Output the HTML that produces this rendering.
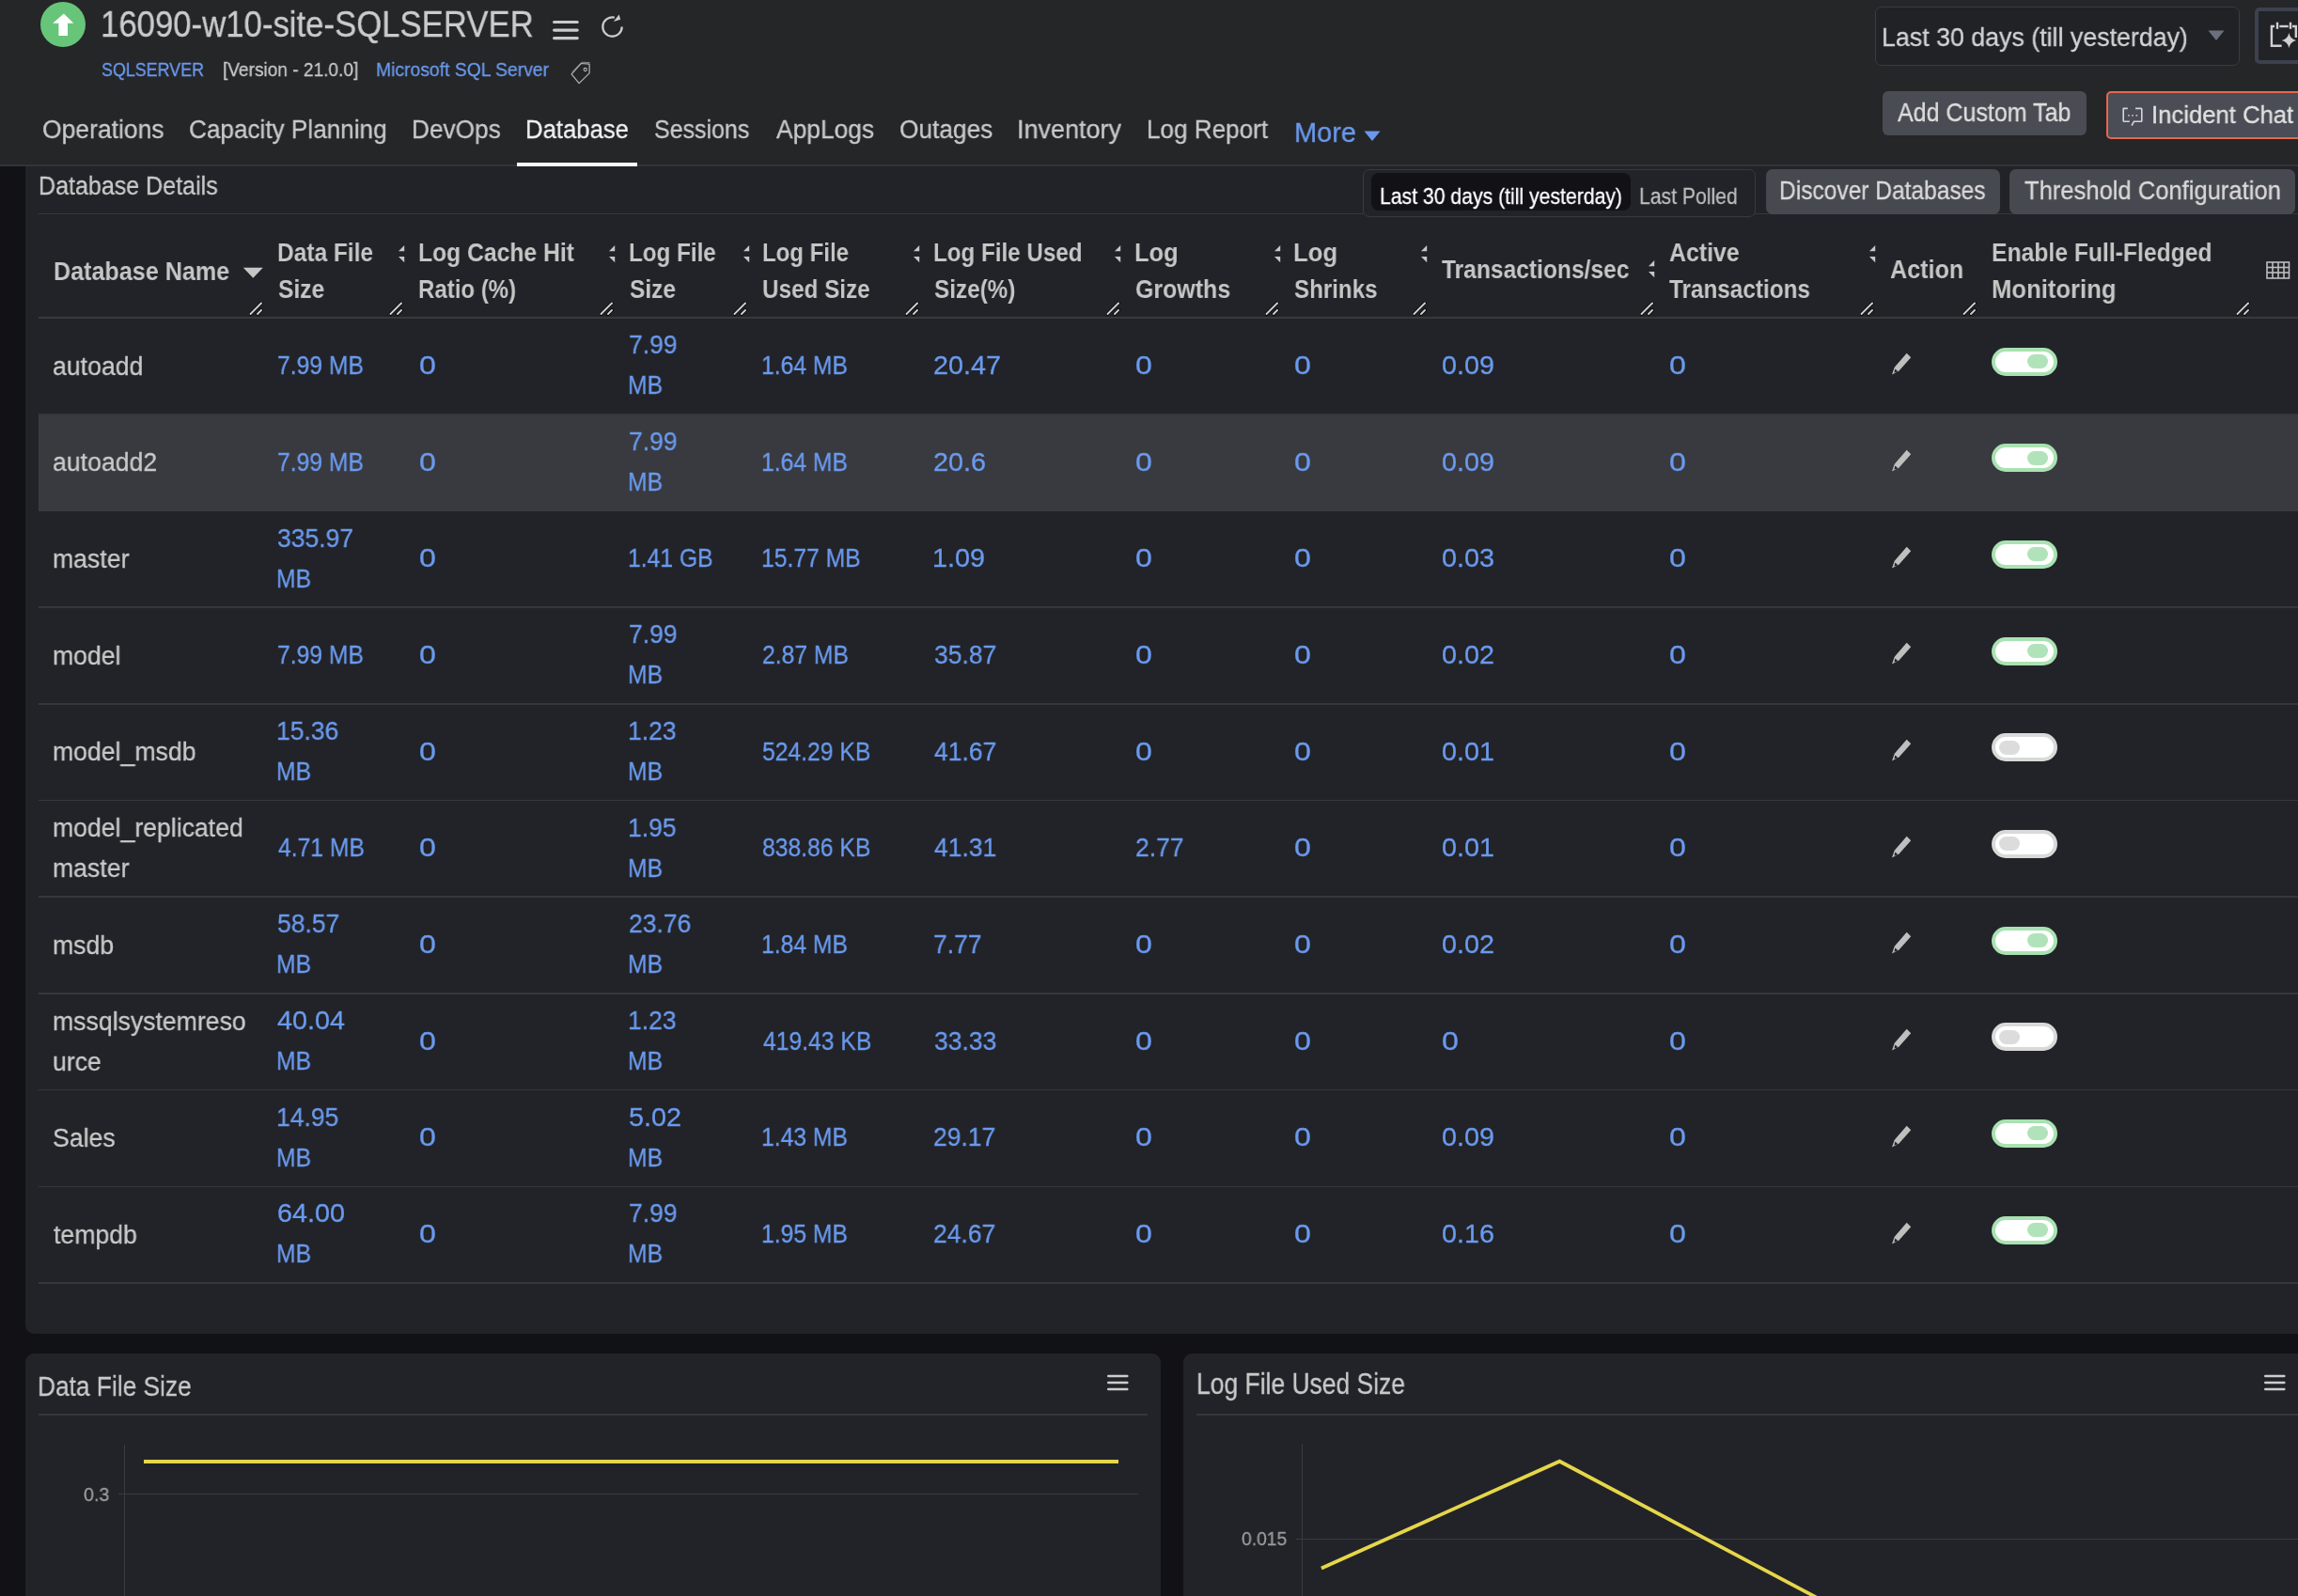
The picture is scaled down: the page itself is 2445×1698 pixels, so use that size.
<!DOCTYPE html>
<html><head><meta charset="utf-8"><title>Database</title>
<style>
html,body{margin:0;padding:0;}
body{width:2445px;height:1698px;overflow:hidden;background:#111116;position:relative;font-family:"Liberation Sans",sans-serif;}
.t{position:absolute;white-space:pre;line-height:1;transform-origin:0 0;}
.b{position:absolute;box-sizing:border-box;}
.t{will-change:transform;}
.t{-webkit-text-stroke:0.3px currentColor;}
.t[style*="font-weight:700"]{-webkit-text-stroke:0;}

</style></head><body>
<div class="b" style="left:0;top:0;width:2445px;height:175px;background:#252628"></div>
<div class="b" style="left:0;top:175px;width:2445px;height:2px;background:#333437"></div>
<div class="b" style="left:43px;top:2px;width:48px;height:48px;border-radius:50%;background:#67c57a"></div>
<svg class="b" style="left:43px;top:2px" width="48" height="48"><path d="M24.9 12.4 L35.3 22.8 L29 22.8 L29 35.9 L19.4 35.9 L19.4 22.8 L13.1 22.8 Z" fill="#fff"/></svg>
<svg class="b" style="left:586px;top:18px" width="32" height="28"><g stroke="#cbcbcb" stroke-width="3.2" stroke-linecap="round"><line x1="3.6" y1="5.5" x2="28.2" y2="5.5"/><line x1="3.6" y1="14.1" x2="28.2" y2="14.1"/><line x1="3.6" y1="22.6" x2="28.2" y2="22.6"/></g></svg>
<svg class="b" style="left:636px;top:12px" width="32" height="32"><path d="M25.7 16.5 A10.2 10.2 0 1 1 17.8 6.6" fill="none" stroke="#cbcbcb" stroke-width="2.3"/><path d="M16.8 10.9 L24.2 8.8 L22.6 3.4 Z" fill="#cbcbcb"/></svg>
<svg class="b" style="left:604px;top:63px" width="28" height="30"><path d="M4.1 15.8 L12.1 25.6 L23.1 14.9 L23.1 5.1 L14.2 4.5 Z" fill="none" stroke="#b5b5b5" stroke-width="1.2" stroke-linejoin="round"/><path d="M5 13.5 L14.8 3.2 L23.6 3.6" fill="none" stroke="#8a8a8a" stroke-width="1"/><circle cx="18.7" cy="11" r="1.6" fill="none" stroke="#b5b5b5" stroke-width="1.1"/></svg>
<svg class="b" style="left:1451px;top:139px" width="18" height="12"><path d="M0.5 0.5 L17.5 0.5 L9 11 Z" fill="#6a9aee"/></svg>
<div class="b" style="left:550px;top:173px;width:128px;height:4px;background:#fafafa"></div>
<div class="b" style="left:1994.5px;top:6.5px;width:388px;height:63px;border:1px solid #3a3b3f;border-radius:7px;background:#212226"></div>
<svg class="b" style="left:2349px;top:32px" width="18" height="12"><path d="M0.5 0.5 L17.5 0.5 L9 11 Z" fill="#6b707c"/></svg>
<div class="b" style="left:2399.2px;top:8.2px;width:60px;height:59.5px;border:4px solid #3c414d;border-radius:5px;background:#222327"></div>
<svg class="b" style="left:2413px;top:22px" width="34" height="32"><g fill="none" stroke="#cfcfcf" stroke-width="2.4"><path d="M7 6 L3.9 6 L3.9 26.8 L14.6 26.8"/><path d="M12.3 6 L21.7 6"/><path d="M10 1.7 L10 8.8"/><path d="M24 1.7 L24 8.8"/><path d="M26 6 L29.8 6 L29.8 18"/></g><path d="M22.4 13 Q23.7 19.7 30.2 21 Q23.7 22.3 22.4 29 Q21.1 22.3 14.6 21 Q21.1 19.7 22.4 13 Z" fill="#d0d0d0"/></svg>
<div class="b" style="left:2003.4px;top:97.4px;width:216.2px;height:47px;border-radius:6px;background:#4a4c53"></div>
<div class="b" style="left:2240.5px;top:96.8px;width:220px;height:51px;border:2.5px solid #e6674f;border-radius:5px;background:#4a4d55"></div>
<svg class="b" style="left:2256px;top:111px" width="26" height="26"><g fill="none" stroke="#d5d5d5" stroke-width="1.6" stroke-linejoin="round"><path d="M7.8 4.4 L3.4 4.4 Q3.2 4.4 3.2 5 L3.2 17.6 Q3.2 18.3 4 18.3 L9.9 18.3"/><path d="M16 4.4 L22 4.4 Q22.8 4.4 22.8 5.2 L22.8 17.5 Q22.8 18.3 22 18.3 L14.3 18.3 L12.1 22.7"/></g><circle cx="9" cy="11.8" r="0.9" fill="#d5d5d5"/><circle cx="13" cy="11.8" r="0.9" fill="#d5d5d5"/><circle cx="17.3" cy="11.8" r="0.9" fill="#d5d5d5"/></svg>
<div class="b" style="left:27px;top:177px;width:2430px;height:1241.7px;background:#222328;border-radius:0 0 0 9px"></div>
<div class="b" style="left:41px;top:226.5px;width:2404px;height:1.5px;background:#36373b"></div>
<div class="b" style="left:1450px;top:180.4px;width:418px;height:50.6px;border:1px solid #393a3e;border-radius:7px;background:#222328"></div>
<div class="b" style="left:1459px;top:184px;width:275.6px;height:39.6px;border-radius:8px;background:#111116"></div>
<div class="b" style="left:1878.7px;top:180px;width:249px;height:48px;border-radius:7px;background:#474950"></div>
<div class="b" style="left:2138px;top:180px;width:304px;height:48px;border-radius:7px;background:#474950"></div>
<svg class="b" style="left:258px;top:284px" width="23" height="13"><path d="M0.8 0.8 L21.8 0.8 L11.3 11.8 Z" fill="#c6c6c6"/></svg>
<svg class="b" style="left:2411px;top:278px" width="26" height="20"><g fill="none" stroke="#bdbdbd" stroke-width="1.6"><rect x="1" y="1" width="23.5" height="17"/><line x1="1" y1="6.5" x2="24.5" y2="6.5"/><line x1="1" y1="12" x2="24.5" y2="12"/><line x1="7" y1="1" x2="7" y2="18"/><line x1="13" y1="1" x2="13" y2="18"/><line x1="19" y1="1" x2="19" y2="18"/></g></svg>
<svg class="b" style="left:424px;top:260.7px" width="7" height="19"><path d="M0 6.2 L6.2 0 L6.2 6.2 Z M0 12.1 L6.2 12.1 L6.2 18.3 Z" fill="#c6c6c6"/></svg>
<svg class="b" style="left:647.5px;top:260.7px" width="7" height="19"><path d="M0 6.2 L6.2 0 L6.2 6.2 Z M0 12.1 L6.2 12.1 L6.2 18.3 Z" fill="#c6c6c6"/></svg>
<svg class="b" style="left:790.5px;top:260.7px" width="7" height="19"><path d="M0 6.2 L6.2 0 L6.2 6.2 Z M0 12.1 L6.2 12.1 L6.2 18.3 Z" fill="#c6c6c6"/></svg>
<svg class="b" style="left:972px;top:260.7px" width="7" height="19"><path d="M0 6.2 L6.2 0 L6.2 6.2 Z M0 12.1 L6.2 12.1 L6.2 18.3 Z" fill="#c6c6c6"/></svg>
<svg class="b" style="left:1186px;top:260.7px" width="7" height="19"><path d="M0 6.2 L6.2 0 L6.2 6.2 Z M0 12.1 L6.2 12.1 L6.2 18.3 Z" fill="#c6c6c6"/></svg>
<svg class="b" style="left:1355.5px;top:260.7px" width="7" height="19"><path d="M0 6.2 L6.2 0 L6.2 6.2 Z M0 12.1 L6.2 12.1 L6.2 18.3 Z" fill="#c6c6c6"/></svg>
<svg class="b" style="left:1512px;top:260.7px" width="7" height="19"><path d="M0 6.2 L6.2 0 L6.2 6.2 Z M0 12.1 L6.2 12.1 L6.2 18.3 Z" fill="#c6c6c6"/></svg>
<svg class="b" style="left:1754px;top:277px" width="7" height="19"><path d="M0 6.2 L6.2 0 L6.2 6.2 Z M0 12.1 L6.2 12.1 L6.2 18.3 Z" fill="#c6c6c6"/></svg>
<svg class="b" style="left:1988.5px;top:261px" width="7" height="19"><path d="M0 6.2 L6.2 0 L6.2 6.2 Z M0 12.1 L6.2 12.1 L6.2 18.3 Z" fill="#c6c6c6"/></svg>
<svg class="b" style="left:264.5px;top:321px" width="15" height="15"><g stroke="#000" stroke-width="3.5" stroke-linecap="round"><line x1="1.5" y1="13" x2="13" y2="1.5"/><line x1="9" y1="13" x2="13" y2="9"/></g><g stroke="#cfcfcf" stroke-width="2" stroke-linecap="round"><line x1="1.5" y1="13" x2="13" y2="1.5"/><line x1="9" y1="13" x2="13" y2="9"/></g></svg>
<svg class="b" style="left:414px;top:321px" width="15" height="15"><g stroke="#000" stroke-width="3.5" stroke-linecap="round"><line x1="1.5" y1="13" x2="13" y2="1.5"/><line x1="9" y1="13" x2="13" y2="9"/></g><g stroke="#cfcfcf" stroke-width="2" stroke-linecap="round"><line x1="1.5" y1="13" x2="13" y2="1.5"/><line x1="9" y1="13" x2="13" y2="9"/></g></svg>
<svg class="b" style="left:638px;top:321px" width="15" height="15"><g stroke="#000" stroke-width="3.5" stroke-linecap="round"><line x1="1.5" y1="13" x2="13" y2="1.5"/><line x1="9" y1="13" x2="13" y2="9"/></g><g stroke="#cfcfcf" stroke-width="2" stroke-linecap="round"><line x1="1.5" y1="13" x2="13" y2="1.5"/><line x1="9" y1="13" x2="13" y2="9"/></g></svg>
<svg class="b" style="left:779.5px;top:321px" width="15" height="15"><g stroke="#000" stroke-width="3.5" stroke-linecap="round"><line x1="1.5" y1="13" x2="13" y2="1.5"/><line x1="9" y1="13" x2="13" y2="9"/></g><g stroke="#cfcfcf" stroke-width="2" stroke-linecap="round"><line x1="1.5" y1="13" x2="13" y2="1.5"/><line x1="9" y1="13" x2="13" y2="9"/></g></svg>
<svg class="b" style="left:962.6px;top:321px" width="15" height="15"><g stroke="#000" stroke-width="3.5" stroke-linecap="round"><line x1="1.5" y1="13" x2="13" y2="1.5"/><line x1="9" y1="13" x2="13" y2="9"/></g><g stroke="#cfcfcf" stroke-width="2" stroke-linecap="round"><line x1="1.5" y1="13" x2="13" y2="1.5"/><line x1="9" y1="13" x2="13" y2="9"/></g></svg>
<svg class="b" style="left:1176.7px;top:321px" width="15" height="15"><g stroke="#000" stroke-width="3.5" stroke-linecap="round"><line x1="1.5" y1="13" x2="13" y2="1.5"/><line x1="9" y1="13" x2="13" y2="9"/></g><g stroke="#cfcfcf" stroke-width="2" stroke-linecap="round"><line x1="1.5" y1="13" x2="13" y2="1.5"/><line x1="9" y1="13" x2="13" y2="9"/></g></svg>
<svg class="b" style="left:1346px;top:321px" width="15" height="15"><g stroke="#000" stroke-width="3.5" stroke-linecap="round"><line x1="1.5" y1="13" x2="13" y2="1.5"/><line x1="9" y1="13" x2="13" y2="9"/></g><g stroke="#cfcfcf" stroke-width="2" stroke-linecap="round"><line x1="1.5" y1="13" x2="13" y2="1.5"/><line x1="9" y1="13" x2="13" y2="9"/></g></svg>
<svg class="b" style="left:1502.5px;top:321px" width="15" height="15"><g stroke="#000" stroke-width="3.5" stroke-linecap="round"><line x1="1.5" y1="13" x2="13" y2="1.5"/><line x1="9" y1="13" x2="13" y2="9"/></g><g stroke="#cfcfcf" stroke-width="2" stroke-linecap="round"><line x1="1.5" y1="13" x2="13" y2="1.5"/><line x1="9" y1="13" x2="13" y2="9"/></g></svg>
<svg class="b" style="left:1744.5px;top:321px" width="15" height="15"><g stroke="#000" stroke-width="3.5" stroke-linecap="round"><line x1="1.5" y1="13" x2="13" y2="1.5"/><line x1="9" y1="13" x2="13" y2="9"/></g><g stroke="#cfcfcf" stroke-width="2" stroke-linecap="round"><line x1="1.5" y1="13" x2="13" y2="1.5"/><line x1="9" y1="13" x2="13" y2="9"/></g></svg>
<svg class="b" style="left:1978.7px;top:321px" width="15" height="15"><g stroke="#000" stroke-width="3.5" stroke-linecap="round"><line x1="1.5" y1="13" x2="13" y2="1.5"/><line x1="9" y1="13" x2="13" y2="9"/></g><g stroke="#cfcfcf" stroke-width="2" stroke-linecap="round"><line x1="1.5" y1="13" x2="13" y2="1.5"/><line x1="9" y1="13" x2="13" y2="9"/></g></svg>
<svg class="b" style="left:2088px;top:321px" width="15" height="15"><g stroke="#000" stroke-width="3.5" stroke-linecap="round"><line x1="1.5" y1="13" x2="13" y2="1.5"/><line x1="9" y1="13" x2="13" y2="9"/></g><g stroke="#cfcfcf" stroke-width="2" stroke-linecap="round"><line x1="1.5" y1="13" x2="13" y2="1.5"/><line x1="9" y1="13" x2="13" y2="9"/></g></svg>
<svg class="b" style="left:2378.8px;top:321px" width="15" height="15"><g stroke="#000" stroke-width="3.5" stroke-linecap="round"><line x1="1.5" y1="13" x2="13" y2="1.5"/><line x1="9" y1="13" x2="13" y2="9"/></g><g stroke="#cfcfcf" stroke-width="2" stroke-linecap="round"><line x1="1.5" y1="13" x2="13" y2="1.5"/><line x1="9" y1="13" x2="13" y2="9"/></g></svg>
<div class="b" style="left:41px;top:336.8px;width:2404px;height:1.8px;background:#38393d"></div>
<div class="b" style="left:41px;top:440.08px;width:2404px;height:1.5px;background:#36373b"></div>
<svg class="b" style="left:2010px;top:373.40px" width="26" height="28"><path d="M18.7 2.7 L23.2 7.3 L10.5 21.6 L3 25.6 L5.7 17.7 Z" fill="#bfbfbf"/><path d="M6.4 19.4 L9.4 22.2 L5.4 23.6 Z" fill="#222328"/></svg>
<div class="b" style="left:2119px;top:369.50px;width:70px;height:30px;border-radius:15px;background:#fff;border:4px solid #a9e2b2"></div>
<div class="b" style="left:2157px;top:377.00px;width:22px;height:15px;border-radius:8px;background:#b0e3b9"></div>
<div class="b" style="left:41px;top:441.58px;width:2404px;height:102.18px;background:#393a40"></div>
<svg class="b" style="left:2010px;top:476.08px" width="26" height="28"><path d="M18.7 2.7 L23.2 7.3 L10.5 21.6 L3 25.6 L5.7 17.7 Z" fill="#bfbfbf"/><path d="M6.4 19.4 L9.4 22.2 L5.4 23.6 Z" fill="#222328"/></svg>
<div class="b" style="left:2119px;top:472.18px;width:70px;height:30px;border-radius:15px;background:#fff;border:4px solid #a9e2b2"></div>
<div class="b" style="left:2157px;top:479.68px;width:22px;height:15px;border-radius:8px;background:#b0e3b9"></div>
<div class="b" style="left:41px;top:645.44px;width:2404px;height:1.5px;background:#36373b"></div>
<svg class="b" style="left:2010px;top:578.76px" width="26" height="28"><path d="M18.7 2.7 L23.2 7.3 L10.5 21.6 L3 25.6 L5.7 17.7 Z" fill="#bfbfbf"/><path d="M6.4 19.4 L9.4 22.2 L5.4 23.6 Z" fill="#222328"/></svg>
<div class="b" style="left:2119px;top:574.86px;width:70px;height:30px;border-radius:15px;background:#fff;border:4px solid #a9e2b2"></div>
<div class="b" style="left:2157px;top:582.36px;width:22px;height:15px;border-radius:8px;background:#b0e3b9"></div>
<div class="b" style="left:41px;top:748.12px;width:2404px;height:1.5px;background:#36373b"></div>
<svg class="b" style="left:2010px;top:681.44px" width="26" height="28"><path d="M18.7 2.7 L23.2 7.3 L10.5 21.6 L3 25.6 L5.7 17.7 Z" fill="#bfbfbf"/><path d="M6.4 19.4 L9.4 22.2 L5.4 23.6 Z" fill="#222328"/></svg>
<div class="b" style="left:2119px;top:677.54px;width:70px;height:30px;border-radius:15px;background:#fff;border:4px solid #a9e2b2"></div>
<div class="b" style="left:2157px;top:685.04px;width:22px;height:15px;border-radius:8px;background:#b0e3b9"></div>
<div class="b" style="left:41px;top:850.80px;width:2404px;height:1.5px;background:#36373b"></div>
<svg class="b" style="left:2010px;top:784.12px" width="26" height="28"><path d="M18.7 2.7 L23.2 7.3 L10.5 21.6 L3 25.6 L5.7 17.7 Z" fill="#bfbfbf"/><path d="M6.4 19.4 L9.4 22.2 L5.4 23.6 Z" fill="#222328"/></svg>
<div class="b" style="left:2119px;top:780.22px;width:70px;height:30px;border-radius:15px;background:#fff;border:4px solid #d9d9d9"></div>
<div class="b" style="left:2127px;top:787.72px;width:22px;height:15px;border-radius:8px;background:#dcdcdc"></div>
<div class="b" style="left:41px;top:953.48px;width:2404px;height:1.5px;background:#36373b"></div>
<svg class="b" style="left:2010px;top:886.80px" width="26" height="28"><path d="M18.7 2.7 L23.2 7.3 L10.5 21.6 L3 25.6 L5.7 17.7 Z" fill="#bfbfbf"/><path d="M6.4 19.4 L9.4 22.2 L5.4 23.6 Z" fill="#222328"/></svg>
<div class="b" style="left:2119px;top:882.90px;width:70px;height:30px;border-radius:15px;background:#fff;border:4px solid #d9d9d9"></div>
<div class="b" style="left:2127px;top:890.40px;width:22px;height:15px;border-radius:8px;background:#dcdcdc"></div>
<div class="b" style="left:41px;top:1056.16px;width:2404px;height:1.5px;background:#36373b"></div>
<svg class="b" style="left:2010px;top:989.48px" width="26" height="28"><path d="M18.7 2.7 L23.2 7.3 L10.5 21.6 L3 25.6 L5.7 17.7 Z" fill="#bfbfbf"/><path d="M6.4 19.4 L9.4 22.2 L5.4 23.6 Z" fill="#222328"/></svg>
<div class="b" style="left:2119px;top:985.58px;width:70px;height:30px;border-radius:15px;background:#fff;border:4px solid #a9e2b2"></div>
<div class="b" style="left:2157px;top:993.08px;width:22px;height:15px;border-radius:8px;background:#b0e3b9"></div>
<div class="b" style="left:41px;top:1158.84px;width:2404px;height:1.5px;background:#36373b"></div>
<svg class="b" style="left:2010px;top:1092.16px" width="26" height="28"><path d="M18.7 2.7 L23.2 7.3 L10.5 21.6 L3 25.6 L5.7 17.7 Z" fill="#bfbfbf"/><path d="M6.4 19.4 L9.4 22.2 L5.4 23.6 Z" fill="#222328"/></svg>
<div class="b" style="left:2119px;top:1088.26px;width:70px;height:30px;border-radius:15px;background:#fff;border:4px solid #d9d9d9"></div>
<div class="b" style="left:2127px;top:1095.76px;width:22px;height:15px;border-radius:8px;background:#dcdcdc"></div>
<div class="b" style="left:41px;top:1261.52px;width:2404px;height:1.5px;background:#36373b"></div>
<svg class="b" style="left:2010px;top:1194.84px" width="26" height="28"><path d="M18.7 2.7 L23.2 7.3 L10.5 21.6 L3 25.6 L5.7 17.7 Z" fill="#bfbfbf"/><path d="M6.4 19.4 L9.4 22.2 L5.4 23.6 Z" fill="#222328"/></svg>
<div class="b" style="left:2119px;top:1190.94px;width:70px;height:30px;border-radius:15px;background:#fff;border:4px solid #a9e2b2"></div>
<div class="b" style="left:2157px;top:1198.44px;width:22px;height:15px;border-radius:8px;background:#b0e3b9"></div>
<div class="b" style="left:41px;top:1364.20px;width:2404px;height:1.5px;background:#36373b"></div>
<svg class="b" style="left:2010px;top:1297.52px" width="26" height="28"><path d="M18.7 2.7 L23.2 7.3 L10.5 21.6 L3 25.6 L5.7 17.7 Z" fill="#bfbfbf"/><path d="M6.4 19.4 L9.4 22.2 L5.4 23.6 Z" fill="#222328"/></svg>
<div class="b" style="left:2119px;top:1293.62px;width:70px;height:30px;border-radius:15px;background:#fff;border:4px solid #a9e2b2"></div>
<div class="b" style="left:2157px;top:1301.12px;width:22px;height:15px;border-radius:8px;background:#b0e3b9"></div>
<div class="b" style="left:27.2px;top:1440.4px;width:1207.6px;height:300px;border-radius:9px;background:#222328"></div>
<div class="b" style="left:1258.5px;top:1440.4px;width:1200px;height:300px;border-radius:9px;background:#222328"></div>
<svg class="b" style="left:1177.6px;top:1462px" width="23" height="20"><g stroke="#cdcdcd" stroke-width="2.6" stroke-linecap="round"><line x1="1.3" y1="2" x2="21.3" y2="2"/><line x1="1.3" y1="9" x2="21.3" y2="9"/><line x1="1.3" y1="16" x2="21.3" y2="16"/></g></svg>
<svg class="b" style="left:2409px;top:1462px" width="23" height="20"><g stroke="#cdcdcd" stroke-width="2.6" stroke-linecap="round"><line x1="1.3" y1="2" x2="21.3" y2="2"/><line x1="1.3" y1="9" x2="21.3" y2="9"/><line x1="1.3" y1="16" x2="21.3" y2="16"/></g></svg>
<div class="b" style="left:41px;top:1504.3px;width:1180px;height:1.5px;background:#36373b"></div>
<div class="b" style="left:1273px;top:1504px;width:1180px;height:1.5px;background:#36373b"></div>
<div class="b" style="left:132.2px;top:1536.7px;width:1.2px;height:170px;background:#3a3b3f"></div>
<div class="b" style="left:126px;top:1588.5px;width:1085px;height:1.2px;background:#3a3b3f"></div>
<div class="b" style="left:152.9px;top:1552.9px;width:1037.3px;height:4px;background:#e6d64a"></div>
<div class="b" style="left:1385.3px;top:1535.9px;width:1.2px;height:170px;background:#3a3b3f"></div>
<div class="b" style="left:1379px;top:1636.5px;width:1070px;height:1.2px;background:#3a3b3f"></div>
<svg class="b" style="left:1380px;top:1531px" width="1065" height="168"><polyline points="25.9,137.5 279.4,23.7 551.4,167.9 700,250" fill="none" stroke="#e6d64a" stroke-width="3.8"/></svg>
<div class="t" style="left:107.17px;top:6.89px;font-size:38.95px;font-weight:400;color:#cbcbcb;transform:scaleX(0.8919);">16090-w10-site-SQLSERVER</div>
<div class="t" style="left:108.28px;top:63.81px;font-size:20.93px;font-weight:400;color:#6a9aee;transform:scaleX(0.8542);">SQLSERVER</div>
<div class="t" style="left:236.96px;top:64.03px;font-size:20.90px;font-weight:400;color:#c9c9c9;transform:scaleX(0.9135);">[Version - 21.0.0]</div>
<div class="t" style="left:400.45px;top:63.81px;font-size:20.93px;font-weight:400;color:#6a9aee;transform:scaleX(0.9237);">Microsoft SQL Server</div>
<div class="t" style="left:44.94px;top:124.23px;font-size:27.62px;font-weight:400;color:#c9c9c9;transform:scaleX(0.9590);">Operations</div>
<div class="t" style="left:201.29px;top:124.23px;font-size:27.62px;font-weight:400;color:#c9c9c9;transform:scaleX(0.9464);">Capacity Planning</div>
<div class="t" style="left:437.50px;top:124.23px;font-size:27.62px;font-weight:400;color:#c9c9c9;transform:scaleX(0.9502);">DevOps</div>
<div class="t" style="left:558.54px;top:124.23px;font-size:27.62px;font-weight:400;color:#f2f2f2;transform:scaleX(0.9303);">Database</div>
<div class="t" style="left:695.70px;top:124.23px;font-size:27.62px;font-weight:400;color:#c9c9c9;transform:scaleX(0.9044);">Sessions</div>
<div class="t" style="left:825.50px;top:124.23px;font-size:27.62px;font-weight:400;color:#c9c9c9;transform:scaleX(0.9548);">AppLogs</div>
<div class="t" style="left:957.35px;top:124.23px;font-size:27.62px;font-weight:400;color:#c9c9c9;transform:scaleX(0.9516);">Outages</div>
<div class="t" style="left:1082.37px;top:124.23px;font-size:27.62px;font-weight:400;color:#c9c9c9;transform:scaleX(0.9774);">Inventory</div>
<div class="t" style="left:1219.91px;top:124.23px;font-size:27.62px;font-weight:400;color:#c9c9c9;transform:scaleX(0.9443);">Log Report</div>
<div class="t" style="left:1376.68px;top:125.38px;font-size:30.38px;font-weight:400;color:#6a9aee;transform:scaleX(0.9531);">More</div>
<div class="t" style="left:2002.36px;top:24.81px;font-size:28.34px;font-weight:400;color:#d2d2d2;transform:scaleX(0.9451);">Last 30 days (till yesterday)</div>
<div class="t" style="left:2019.00px;top:106.67px;font-size:26.74px;font-weight:400;color:#dedede;transform:scaleX(0.9352);">Add Custom Tab</div>
<div class="t" style="left:2288.69px;top:108.66px;font-size:26.16px;font-weight:400;color:#e2e2e2;transform:scaleX(0.9811);">Incident Chat</div>
<div class="t" style="left:40.90px;top:183.53px;font-size:27.62px;font-weight:400;color:#c9c9c9;transform:scaleX(0.9070);">Database Details</div>
<div class="t" style="left:1468.30px;top:197.49px;font-size:24.13px;font-weight:400;color:#ffffff;transform:scaleX(0.8786);">Last 30 days (till yesterday)</div>
<div class="t" style="left:1744.21px;top:197.49px;font-size:24.13px;font-weight:400;color:#bdbdbd;transform:scaleX(0.8769);">Last Polled</div>
<div class="t" style="left:1893.04px;top:189.64px;font-size:26.89px;font-weight:400;color:#d9d9d9;transform:scaleX(0.9131);">Discover Databases</div>
<div class="t" style="left:2154.49px;top:189.64px;font-size:26.89px;font-weight:400;color:#d9d9d9;transform:scaleX(0.9511);">Threshold Configuration</div>
<div class="t" style="left:56.79px;top:274.53px;font-size:27.62px;font-weight:700;color:#c6c6c6;transform:scaleX(0.9099);">Database Name</div>
<div class="t" style="left:294.93px;top:254.31px;font-size:28.34px;font-weight:700;color:#c6c6c6;transform:scaleX(0.8644);">Data File</div>
<div class="t" style="left:295.91px;top:293.41px;font-size:28.34px;font-weight:700;color:#c6c6c6;transform:scaleX(0.8663);">Size</div>
<div class="t" style="left:445.12px;top:254.31px;font-size:28.34px;font-weight:700;color:#c6c6c6;transform:scaleX(0.8710);">Log Cache Hit</div>
<div class="t" style="left:445.16px;top:293.41px;font-size:28.34px;font-weight:700;color:#c6c6c6;transform:scaleX(0.8483);">Ratio (%)</div>
<div class="t" style="left:668.55px;top:254.31px;font-size:28.34px;font-weight:700;color:#c6c6c6;transform:scaleX(0.8541);">Log File</div>
<div class="t" style="left:669.51px;top:293.41px;font-size:28.34px;font-weight:700;color:#c6c6c6;transform:scaleX(0.8627);">Size</div>
<div class="t" style="left:810.56px;top:254.31px;font-size:28.34px;font-weight:700;color:#c6c6c6;transform:scaleX(0.8475);">Log File</div>
<div class="t" style="left:810.54px;top:293.41px;font-size:28.34px;font-weight:700;color:#c6c6c6;transform:scaleX(0.8566);">Used Size</div>
<div class="t" style="left:992.85px;top:254.31px;font-size:28.34px;font-weight:700;color:#c6c6c6;transform:scaleX(0.8531);">Log File Used</div>
<div class="t" style="left:993.81px;top:293.41px;font-size:28.34px;font-weight:700;color:#c6c6c6;transform:scaleX(0.8575);">Size(%)</div>
<div class="t" style="left:1207.47px;top:254.31px;font-size:28.34px;font-weight:700;color:#c6c6c6;transform:scaleX(0.8987);">Log</div>
<div class="t" style="left:1208.00px;top:293.41px;font-size:28.34px;font-weight:700;color:#c6c6c6;transform:scaleX(0.8804);">Growths</div>
<div class="t" style="left:1376.35px;top:254.31px;font-size:28.34px;font-weight:700;color:#c6c6c6;transform:scaleX(0.9090);">Log</div>
<div class="t" style="left:1377.42px;top:293.41px;font-size:28.34px;font-weight:700;color:#c6c6c6;transform:scaleX(0.8508);">Shrinks</div>
<div class="t" style="left:1534.25px;top:273.43px;font-size:27.62px;font-weight:700;color:#c6c6c6;transform:scaleX(0.8901);">Transactions/sec</div>
<div class="t" style="left:1776.00px;top:254.31px;font-size:28.34px;font-weight:700;color:#c6c6c6;transform:scaleX(0.8775);">Active</div>
<div class="t" style="left:1776.26px;top:293.41px;font-size:28.34px;font-weight:700;color:#c6c6c6;transform:scaleX(0.8580);">Transactions</div>
<div class="t" style="left:2010.50px;top:273.43px;font-size:27.62px;font-weight:700;color:#c6c6c6;transform:scaleX(0.9106);">Action</div>
<div class="t" style="left:2118.82px;top:254.31px;font-size:28.34px;font-weight:700;color:#c6c6c6;transform:scaleX(0.8716);">Enable Full-Fledged</div>
<div class="t" style="left:2118.76px;top:293.41px;font-size:28.34px;font-weight:700;color:#c6c6c6;transform:scaleX(0.9058);">Monitoring</div>
<div class="t" style="left:56.43px;top:374.51px;font-size:28.34px;font-weight:400;color:#c9c9c9;transform:scaleX(0.94);">autoadd</div>
<div class="t" style="left:294.77px;top:374.88px;font-size:27.91px;font-weight:400;color:#6a9aee;transform:scaleX(0.885);">7.99 MB</div>
<div class="t" style="left:445.64px;top:374.88px;font-size:27.91px;font-weight:400;color:#6a9aee;transform:scaleX(1.15);">0</div>
<div class="t" style="left:668.67px;top:353.28px;font-size:27.91px;font-weight:400;color:#6a9aee;transform:scaleX(0.95);">7.99</div>
<div class="t" style="left:668.02px;top:396.18px;font-size:27.91px;font-weight:400;color:#6a9aee;transform:scaleX(0.885);">MB</div>
<div class="t" style="left:810.27px;top:374.88px;font-size:27.91px;font-weight:400;color:#6a9aee;transform:scaleX(0.885);">1.64 MB</div>
<div class="t" style="left:992.86px;top:374.88px;font-size:27.91px;font-weight:400;color:#6a9aee;transform:scaleX(1.03);">20.47</div>
<div class="t" style="left:1208.04px;top:374.88px;font-size:27.91px;font-weight:400;color:#6a9aee;transform:scaleX(1.15);">0</div>
<div class="t" style="left:1376.94px;top:374.88px;font-size:27.91px;font-weight:400;color:#6a9aee;transform:scaleX(1.15);">0</div>
<div class="t" style="left:1533.64px;top:374.88px;font-size:27.91px;font-weight:400;color:#6a9aee;transform:scaleX(1.03);">0.09</div>
<div class="t" style="left:1775.54px;top:374.88px;font-size:27.91px;font-weight:400;color:#6a9aee;transform:scaleX(1.15);">0</div>
<div class="t" style="left:56.43px;top:477.19px;font-size:28.34px;font-weight:400;color:#c9c9c9;transform:scaleX(0.94);">autoadd2</div>
<div class="t" style="left:294.77px;top:477.56px;font-size:27.91px;font-weight:400;color:#6a9aee;transform:scaleX(0.885);">7.99 MB</div>
<div class="t" style="left:445.64px;top:477.56px;font-size:27.91px;font-weight:400;color:#6a9aee;transform:scaleX(1.15);">0</div>
<div class="t" style="left:668.67px;top:455.96px;font-size:27.91px;font-weight:400;color:#6a9aee;transform:scaleX(0.95);">7.99</div>
<div class="t" style="left:668.02px;top:498.86px;font-size:27.91px;font-weight:400;color:#6a9aee;transform:scaleX(0.885);">MB</div>
<div class="t" style="left:810.27px;top:477.56px;font-size:27.91px;font-weight:400;color:#6a9aee;transform:scaleX(0.885);">1.64 MB</div>
<div class="t" style="left:992.86px;top:477.56px;font-size:27.91px;font-weight:400;color:#6a9aee;transform:scaleX(1.03);">20.6</div>
<div class="t" style="left:1208.04px;top:477.56px;font-size:27.91px;font-weight:400;color:#6a9aee;transform:scaleX(1.15);">0</div>
<div class="t" style="left:1376.94px;top:477.56px;font-size:27.91px;font-weight:400;color:#6a9aee;transform:scaleX(1.15);">0</div>
<div class="t" style="left:1533.64px;top:477.56px;font-size:27.91px;font-weight:400;color:#6a9aee;transform:scaleX(1.03);">0.09</div>
<div class="t" style="left:1775.54px;top:477.56px;font-size:27.91px;font-weight:400;color:#6a9aee;transform:scaleX(1.15);">0</div>
<div class="t" style="left:55.90px;top:579.87px;font-size:28.34px;font-weight:400;color:#c9c9c9;transform:scaleX(0.94);">master</div>
<div class="t" style="left:295.20px;top:558.64px;font-size:27.91px;font-weight:400;color:#6a9aee;transform:scaleX(0.95);">335.97</div>
<div class="t" style="left:294.02px;top:601.54px;font-size:27.91px;font-weight:400;color:#6a9aee;transform:scaleX(0.885);">MB</div>
<div class="t" style="left:445.64px;top:580.24px;font-size:27.91px;font-weight:400;color:#6a9aee;transform:scaleX(1.15);">0</div>
<div class="t" style="left:668.27px;top:580.24px;font-size:27.91px;font-weight:400;color:#6a9aee;transform:scaleX(0.885);">1.41 GB</div>
<div class="t" style="left:810.27px;top:580.24px;font-size:27.91px;font-weight:400;color:#6a9aee;transform:scaleX(0.885);">15.77 MB</div>
<div class="t" style="left:992.29px;top:580.24px;font-size:27.91px;font-weight:400;color:#6a9aee;transform:scaleX(1.03);">1.09</div>
<div class="t" style="left:1208.04px;top:580.24px;font-size:27.91px;font-weight:400;color:#6a9aee;transform:scaleX(1.15);">0</div>
<div class="t" style="left:1376.94px;top:580.24px;font-size:27.91px;font-weight:400;color:#6a9aee;transform:scaleX(1.15);">0</div>
<div class="t" style="left:1533.64px;top:580.24px;font-size:27.91px;font-weight:400;color:#6a9aee;transform:scaleX(1.03);">0.03</div>
<div class="t" style="left:1775.54px;top:580.24px;font-size:27.91px;font-weight:400;color:#6a9aee;transform:scaleX(1.15);">0</div>
<div class="t" style="left:55.90px;top:682.55px;font-size:28.34px;font-weight:400;color:#c9c9c9;transform:scaleX(0.94);">model</div>
<div class="t" style="left:294.77px;top:682.92px;font-size:27.91px;font-weight:400;color:#6a9aee;transform:scaleX(0.885);">7.99 MB</div>
<div class="t" style="left:445.64px;top:682.92px;font-size:27.91px;font-weight:400;color:#6a9aee;transform:scaleX(1.15);">0</div>
<div class="t" style="left:668.67px;top:661.32px;font-size:27.91px;font-weight:400;color:#6a9aee;transform:scaleX(0.95);">7.99</div>
<div class="t" style="left:668.02px;top:704.22px;font-size:27.91px;font-weight:400;color:#6a9aee;transform:scaleX(0.885);">MB</div>
<div class="t" style="left:810.77px;top:682.92px;font-size:27.91px;font-weight:400;color:#6a9aee;transform:scaleX(0.885);">2.87 MB</div>
<div class="t" style="left:993.50px;top:682.92px;font-size:27.91px;font-weight:400;color:#6a9aee;transform:scaleX(0.95);">35.87</div>
<div class="t" style="left:1208.04px;top:682.92px;font-size:27.91px;font-weight:400;color:#6a9aee;transform:scaleX(1.15);">0</div>
<div class="t" style="left:1376.94px;top:682.92px;font-size:27.91px;font-weight:400;color:#6a9aee;transform:scaleX(1.15);">0</div>
<div class="t" style="left:1533.64px;top:682.92px;font-size:27.91px;font-weight:400;color:#6a9aee;transform:scaleX(1.03);">0.02</div>
<div class="t" style="left:1775.54px;top:682.92px;font-size:27.91px;font-weight:400;color:#6a9aee;transform:scaleX(1.15);">0</div>
<div class="t" style="left:55.90px;top:785.23px;font-size:28.34px;font-weight:400;color:#c9c9c9;transform:scaleX(0.94);">model_msdb</div>
<div class="t" style="left:294.14px;top:764.00px;font-size:27.91px;font-weight:400;color:#6a9aee;transform:scaleX(0.95);">15.36</div>
<div class="t" style="left:294.02px;top:806.90px;font-size:27.91px;font-weight:400;color:#6a9aee;transform:scaleX(0.885);">MB</div>
<div class="t" style="left:445.64px;top:785.60px;font-size:27.91px;font-weight:400;color:#6a9aee;transform:scaleX(1.15);">0</div>
<div class="t" style="left:668.14px;top:764.00px;font-size:27.91px;font-weight:400;color:#6a9aee;transform:scaleX(0.95);">1.23</div>
<div class="t" style="left:668.02px;top:806.90px;font-size:27.91px;font-weight:400;color:#6a9aee;transform:scaleX(0.885);">MB</div>
<div class="t" style="left:811.01px;top:785.60px;font-size:27.91px;font-weight:400;color:#6a9aee;transform:scaleX(0.885);">524.29 KB</div>
<div class="t" style="left:993.77px;top:785.60px;font-size:27.91px;font-weight:400;color:#6a9aee;transform:scaleX(0.95);">41.67</div>
<div class="t" style="left:1208.04px;top:785.60px;font-size:27.91px;font-weight:400;color:#6a9aee;transform:scaleX(1.15);">0</div>
<div class="t" style="left:1376.94px;top:785.60px;font-size:27.91px;font-weight:400;color:#6a9aee;transform:scaleX(1.15);">0</div>
<div class="t" style="left:1533.64px;top:785.60px;font-size:27.91px;font-weight:400;color:#6a9aee;transform:scaleX(1.03);">0.01</div>
<div class="t" style="left:1775.54px;top:785.60px;font-size:27.91px;font-weight:400;color:#6a9aee;transform:scaleX(1.15);">0</div>
<div class="t" style="left:55.90px;top:866.31px;font-size:28.34px;font-weight:400;color:#c9c9c9;transform:scaleX(0.94);">model_replicated</div>
<div class="t" style="left:55.90px;top:909.21px;font-size:28.34px;font-weight:400;color:#c9c9c9;transform:scaleX(0.94);">master</div>
<div class="t" style="left:295.51px;top:888.28px;font-size:27.91px;font-weight:400;color:#6a9aee;transform:scaleX(0.885);">4.71 MB</div>
<div class="t" style="left:445.64px;top:888.28px;font-size:27.91px;font-weight:400;color:#6a9aee;transform:scaleX(1.15);">0</div>
<div class="t" style="left:668.14px;top:866.68px;font-size:27.91px;font-weight:400;color:#6a9aee;transform:scaleX(0.95);">1.95</div>
<div class="t" style="left:668.02px;top:909.58px;font-size:27.91px;font-weight:400;color:#6a9aee;transform:scaleX(0.885);">MB</div>
<div class="t" style="left:811.01px;top:888.28px;font-size:27.91px;font-weight:400;color:#6a9aee;transform:scaleX(0.885);">838.86 KB</div>
<div class="t" style="left:993.77px;top:888.28px;font-size:27.91px;font-weight:400;color:#6a9aee;transform:scaleX(0.95);">41.31</div>
<div class="t" style="left:1207.67px;top:888.28px;font-size:27.91px;font-weight:400;color:#6a9aee;transform:scaleX(0.95);">2.77</div>
<div class="t" style="left:1376.94px;top:888.28px;font-size:27.91px;font-weight:400;color:#6a9aee;transform:scaleX(1.15);">0</div>
<div class="t" style="left:1533.64px;top:888.28px;font-size:27.91px;font-weight:400;color:#6a9aee;transform:scaleX(1.03);">0.01</div>
<div class="t" style="left:1775.54px;top:888.28px;font-size:27.91px;font-weight:400;color:#6a9aee;transform:scaleX(1.15);">0</div>
<div class="t" style="left:55.90px;top:990.59px;font-size:28.34px;font-weight:400;color:#c9c9c9;transform:scaleX(0.94);">msdb</div>
<div class="t" style="left:294.94px;top:969.36px;font-size:27.91px;font-weight:400;color:#6a9aee;transform:scaleX(0.95);">58.57</div>
<div class="t" style="left:294.02px;top:1012.26px;font-size:27.91px;font-weight:400;color:#6a9aee;transform:scaleX(0.885);">MB</div>
<div class="t" style="left:445.64px;top:990.96px;font-size:27.91px;font-weight:400;color:#6a9aee;transform:scaleX(1.15);">0</div>
<div class="t" style="left:668.67px;top:969.36px;font-size:27.91px;font-weight:400;color:#6a9aee;transform:scaleX(0.95);">23.76</div>
<div class="t" style="left:668.02px;top:1012.26px;font-size:27.91px;font-weight:400;color:#6a9aee;transform:scaleX(0.885);">MB</div>
<div class="t" style="left:810.27px;top:990.96px;font-size:27.91px;font-weight:400;color:#6a9aee;transform:scaleX(0.885);">1.84 MB</div>
<div class="t" style="left:992.97px;top:990.96px;font-size:27.91px;font-weight:400;color:#6a9aee;transform:scaleX(0.95);">7.77</div>
<div class="t" style="left:1208.04px;top:990.96px;font-size:27.91px;font-weight:400;color:#6a9aee;transform:scaleX(1.15);">0</div>
<div class="t" style="left:1376.94px;top:990.96px;font-size:27.91px;font-weight:400;color:#6a9aee;transform:scaleX(1.15);">0</div>
<div class="t" style="left:1533.64px;top:990.96px;font-size:27.91px;font-weight:400;color:#6a9aee;transform:scaleX(1.03);">0.02</div>
<div class="t" style="left:1775.54px;top:990.96px;font-size:27.91px;font-weight:400;color:#6a9aee;transform:scaleX(1.15);">0</div>
<div class="t" style="left:55.90px;top:1071.67px;font-size:28.34px;font-weight:400;color:#c9c9c9;transform:scaleX(0.94);">mssqlsystemreso</div>
<div class="t" style="left:55.90px;top:1114.57px;font-size:28.34px;font-weight:400;color:#c9c9c9;transform:scaleX(0.94);">urce</div>
<div class="t" style="left:295.43px;top:1072.04px;font-size:27.91px;font-weight:400;color:#6a9aee;transform:scaleX(1.03);">40.04</div>
<div class="t" style="left:294.02px;top:1114.94px;font-size:27.91px;font-weight:400;color:#6a9aee;transform:scaleX(0.885);">MB</div>
<div class="t" style="left:445.64px;top:1093.64px;font-size:27.91px;font-weight:400;color:#6a9aee;transform:scaleX(1.15);">0</div>
<div class="t" style="left:668.14px;top:1072.04px;font-size:27.91px;font-weight:400;color:#6a9aee;transform:scaleX(0.95);">1.23</div>
<div class="t" style="left:668.02px;top:1114.94px;font-size:27.91px;font-weight:400;color:#6a9aee;transform:scaleX(0.885);">MB</div>
<div class="t" style="left:811.51px;top:1093.64px;font-size:27.91px;font-weight:400;color:#6a9aee;transform:scaleX(0.885);">419.43 KB</div>
<div class="t" style="left:993.50px;top:1093.64px;font-size:27.91px;font-weight:400;color:#6a9aee;transform:scaleX(0.95);">33.33</div>
<div class="t" style="left:1208.04px;top:1093.64px;font-size:27.91px;font-weight:400;color:#6a9aee;transform:scaleX(1.15);">0</div>
<div class="t" style="left:1376.94px;top:1093.64px;font-size:27.91px;font-weight:400;color:#6a9aee;transform:scaleX(1.15);">0</div>
<div class="t" style="left:1533.54px;top:1093.64px;font-size:27.91px;font-weight:400;color:#6a9aee;transform:scaleX(1.15);">0</div>
<div class="t" style="left:1775.54px;top:1093.64px;font-size:27.91px;font-weight:400;color:#6a9aee;transform:scaleX(1.15);">0</div>
<div class="t" style="left:56.43px;top:1195.95px;font-size:28.34px;font-weight:400;color:#c9c9c9;transform:scaleX(0.94);">Sales</div>
<div class="t" style="left:294.14px;top:1174.72px;font-size:27.91px;font-weight:400;color:#6a9aee;transform:scaleX(0.95);">14.95</div>
<div class="t" style="left:294.02px;top:1217.62px;font-size:27.91px;font-weight:400;color:#6a9aee;transform:scaleX(0.885);">MB</div>
<div class="t" style="left:445.64px;top:1196.32px;font-size:27.91px;font-weight:400;color:#6a9aee;transform:scaleX(1.15);">0</div>
<div class="t" style="left:668.85px;top:1174.72px;font-size:27.91px;font-weight:400;color:#6a9aee;transform:scaleX(1.03);">5.02</div>
<div class="t" style="left:668.02px;top:1217.62px;font-size:27.91px;font-weight:400;color:#6a9aee;transform:scaleX(0.885);">MB</div>
<div class="t" style="left:810.27px;top:1196.32px;font-size:27.91px;font-weight:400;color:#6a9aee;transform:scaleX(0.885);">1.43 MB</div>
<div class="t" style="left:992.97px;top:1196.32px;font-size:27.91px;font-weight:400;color:#6a9aee;transform:scaleX(0.95);">29.17</div>
<div class="t" style="left:1208.04px;top:1196.32px;font-size:27.91px;font-weight:400;color:#6a9aee;transform:scaleX(1.15);">0</div>
<div class="t" style="left:1376.94px;top:1196.32px;font-size:27.91px;font-weight:400;color:#6a9aee;transform:scaleX(1.15);">0</div>
<div class="t" style="left:1533.64px;top:1196.32px;font-size:27.91px;font-weight:400;color:#6a9aee;transform:scaleX(1.03);">0.09</div>
<div class="t" style="left:1775.54px;top:1196.32px;font-size:27.91px;font-weight:400;color:#6a9aee;transform:scaleX(1.15);">0</div>
<div class="t" style="left:57.23px;top:1298.63px;font-size:28.34px;font-weight:400;color:#c9c9c9;transform:scaleX(0.94);">tempdb</div>
<div class="t" style="left:294.56px;top:1277.40px;font-size:27.91px;font-weight:400;color:#6a9aee;transform:scaleX(1.03);">64.00</div>
<div class="t" style="left:294.02px;top:1320.30px;font-size:27.91px;font-weight:400;color:#6a9aee;transform:scaleX(0.885);">MB</div>
<div class="t" style="left:445.64px;top:1299.00px;font-size:27.91px;font-weight:400;color:#6a9aee;transform:scaleX(1.15);">0</div>
<div class="t" style="left:668.67px;top:1277.40px;font-size:27.91px;font-weight:400;color:#6a9aee;transform:scaleX(0.95);">7.99</div>
<div class="t" style="left:668.02px;top:1320.30px;font-size:27.91px;font-weight:400;color:#6a9aee;transform:scaleX(0.885);">MB</div>
<div class="t" style="left:810.27px;top:1299.00px;font-size:27.91px;font-weight:400;color:#6a9aee;transform:scaleX(0.885);">1.95 MB</div>
<div class="t" style="left:992.97px;top:1299.00px;font-size:27.91px;font-weight:400;color:#6a9aee;transform:scaleX(0.95);">24.67</div>
<div class="t" style="left:1208.04px;top:1299.00px;font-size:27.91px;font-weight:400;color:#6a9aee;transform:scaleX(1.15);">0</div>
<div class="t" style="left:1376.94px;top:1299.00px;font-size:27.91px;font-weight:400;color:#6a9aee;transform:scaleX(1.15);">0</div>
<div class="t" style="left:1533.64px;top:1299.00px;font-size:27.91px;font-weight:400;color:#6a9aee;transform:scaleX(1.03);">0.16</div>
<div class="t" style="left:1775.54px;top:1299.00px;font-size:27.91px;font-weight:400;color:#6a9aee;transform:scaleX(1.15);">0</div>
<div class="t" style="left:40.30px;top:1458.58px;font-size:30.38px;font-weight:400;color:#c9c9c9;transform:scaleX(0.8655);">Data File Size</div>
<div class="t" style="left:1272.58px;top:1458.18px;font-size:30.96px;font-weight:400;color:#c9c9c9;transform:scaleX(0.8546);">Log File Used Size</div>
<div class="t" style="left:89.31px;top:1579.75px;font-size:20.06px;font-weight:400;color:#9c9c9c;transform:scaleX(0.9790);">0.3</div>
<div class="t" style="left:1321.42px;top:1627.25px;font-size:20.06px;font-weight:400;color:#9c9c9c;transform:scaleX(0.9618);">0.015</div>
</body></html>
